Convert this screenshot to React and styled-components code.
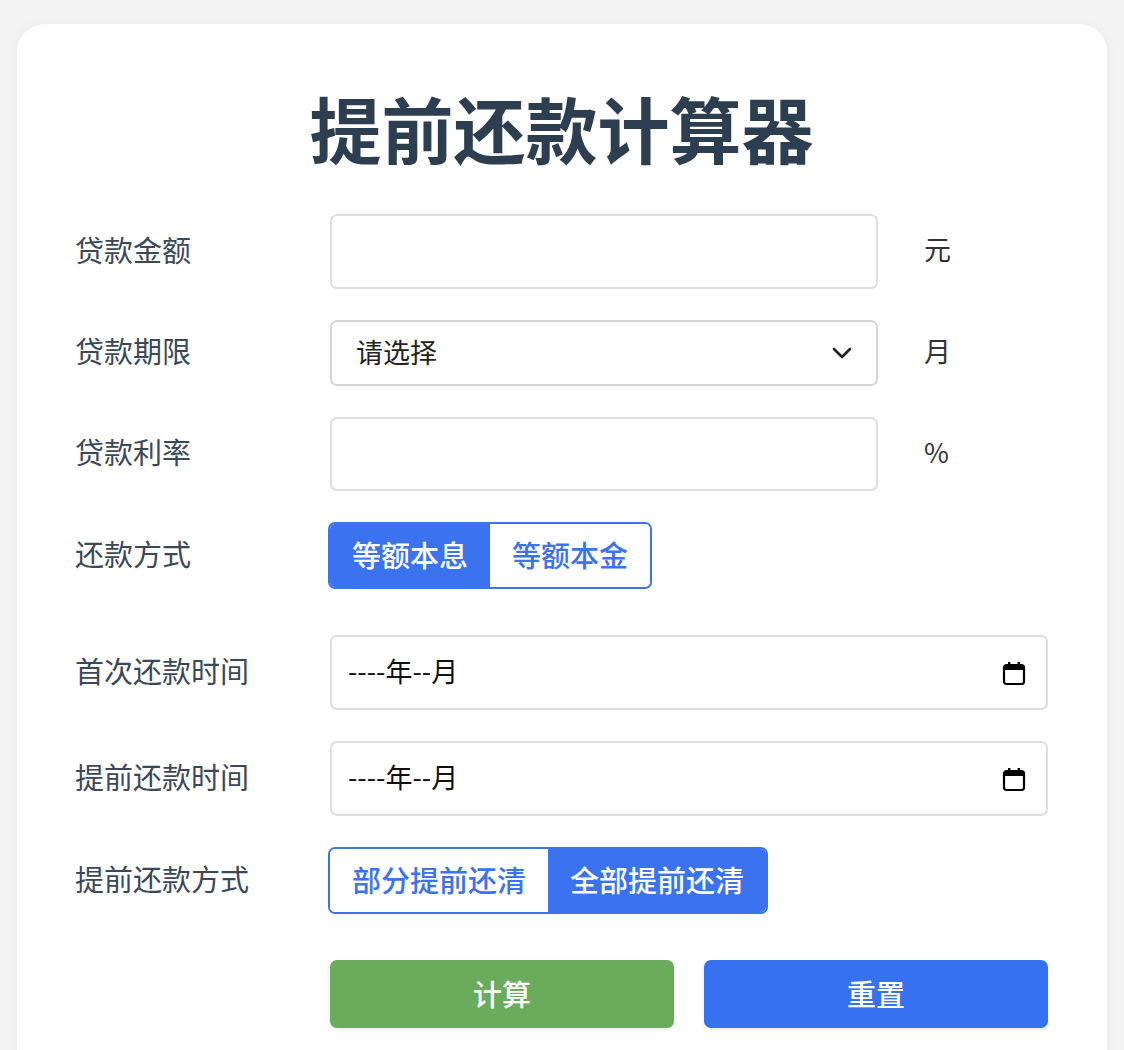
import React from "react"
import styled, { createGlobalStyle } from "styled-components"

const GlobalStyle = createGlobalStyle`
  * {
    box-sizing: border-box;
  }
  body {
    margin: 0;
    background: #f3f3f3;
    font-family: "Noto Sans CJK SC", "Noto Sans", sans-serif;
  }
`

const Page = styled.div`
  padding: 24px 17px 0;
  min-height: 1050px;
`

const Card = styled.div`
  background: #fff;
  border-radius: 28px;
  padding: 60px 59px 40px 58px;
  min-height: 1060px;
  box-shadow: 0 0 12px rgba(0, 0, 0, 0.04);
`

const Title = styled.h1`
  margin: 0 0 44px;
  text-align: center;
  font-size: 72px;
  line-height: 86px;
  font-weight: 700;
  color: #2c3e50;
`

const Row = styled.div`
  display: flex;
  align-items: center;
  margin-bottom: ${(p) => (p.$wide ? "46px" : "31px")};
`

const Label = styled.label`
  width: 255px;
  flex-shrink: 0;
  padding-bottom: 6px;
  font-size: 29px;
  color: #3b4858;
`

const Control = styled.div`
  flex: 1;
  min-width: 0;
  position: relative;
`

const Unit = styled.span`
  width: 170px;
  flex-shrink: 0;
  padding-left: 46px;
  padding-bottom: 6px;
  font-size: 27px;
  color: #333;
`

const TextInput = styled.input`
  display: block;
  width: 100%;
  height: ${(p) => p.$h || 75}px;
  border: 2px solid #dedede;
  border-radius: 7px;
  padding: 0 24px;
  font-size: 28px;
  font-family: inherit;
  outline: none;
  background: #fff;
`

const Select = styled.select`
  display: block;
  width: 100%;
  height: 66px;
  border: 2px solid #d6d6d6;
  border-radius: 7px;
  padding: 0 24px 4px;
  font-size: 27px;
  font-family: inherit;
  color: #222;
  background: #fff;
  appearance: none;
  outline: none;
`

const Chevron = styled.svg`
  position: absolute;
  right: 26px;
  top: 50%;
  margin-top: -6px;
  pointer-events: none;
`

const DateBox = styled.div`
  display: flex;
  align-items: center;
  justify-content: space-between;
  height: 75px;
  border: 2px solid #dedede;
  border-radius: 7px;
  padding: 0 20px 0 16px;
  font-size: 27px;
  color: #111;
`

const DateText = styled.span`
  padding-bottom: 4px;
`

const Group = styled.div`
  display: inline-flex;
  border: 2px solid #3a72ef;
  border-radius: 7px;
  overflow: hidden;
  margin-left: -2px;
`

const GroupButton = styled.button`
  height: 63px;
  padding: 0 22px 4px;
  border: none;
  font-size: 29px;
  font-family: inherit;
  font-weight: 500;
  background: ${(p) => (p.$active ? "#3a72ef" : "#fff")};
  color: ${(p) => (p.$active ? "#fff" : "#3a72ef")};
  cursor: pointer;
`

const Actions = styled.div`
  display: flex;
  gap: 30px;
  margin-left: 255px;
`

const ActionButton = styled.button`
  flex: 1;
  height: 68px;
  padding-bottom: 4px;
  border: none;
  border-radius: 7px;
  font-size: 29px;
  font-family: inherit;
  font-weight: 500;
  color: #fff;
  background: ${(p) => p.$bg};
  box-shadow: 0 2px 4px rgba(0, 0, 0, 0.08);
  cursor: pointer;
`

const CalendarIcon = () => (
  <svg width="24" height="26" viewBox="0 0 24 26">
    <rect x="2" y="5" width="20" height="19" rx="2.5" fill="none" stroke="#000" strokeWidth="2.2" />
    <rect x="2" y="5" width="20" height="5" rx="1.5" fill="#000" />
    <rect x="6" y="2" width="2.4" height="5" fill="#000" />
    <rect x="15.6" y="2" width="2.4" height="5" fill="#000" />
  </svg>
)

const App = () => (
  <Page>
    <GlobalStyle />
    <Card>
      <Title>提前还款计算器</Title>

      <Row>
        <Label>贷款金额</Label>
        <Control>
          <TextInput type="text" />
        </Control>
        <Unit>元</Unit>
      </Row>

      <Row>
        <Label>贷款期限</Label>
        <Control>
          <Select defaultValue="">
            <option value="">请选择</option>
            <option value="12">12</option>
            <option value="24">24</option>
            <option value="36">36</option>
          </Select>
          <Chevron width="20" height="12" viewBox="0 0 20 12">
            <path d="M2 2l8 8 8-8" fill="none" stroke="#222" strokeWidth="2.6" strokeLinecap="round" strokeLinejoin="round" />
          </Chevron>
        </Control>
        <Unit>月</Unit>
      </Row>

      <Row>
        <Label>贷款利率</Label>
        <Control>
          <TextInput type="text" $h={74} />
        </Control>
        <Unit>%</Unit>
      </Row>

      <Row $wide>
        <Label>还款方式</Label>
        <Control>
          <Group>
            <GroupButton $active>等额本息</GroupButton>
            <GroupButton>等额本金</GroupButton>
          </Group>
        </Control>
      </Row>

      <Row>
        <Label>首次还款时间</Label>
        <Control>
          <DateBox>
            <DateText>----年--月</DateText>
            <CalendarIcon />
          </DateBox>
        </Control>
      </Row>

      <Row>
        <Label>提前还款时间</Label>
        <Control>
          <DateBox>
            <DateText>----年--月</DateText>
            <CalendarIcon />
          </DateBox>
        </Control>
      </Row>

      <Row $wide>
        <Label>提前还款方式</Label>
        <Control>
          <Group>
            <GroupButton>部分提前还清</GroupButton>
            <GroupButton $active>全部提前还清</GroupButton>
          </Group>
        </Control>
      </Row>

      <Actions>
        <ActionButton $bg="#6aac5c">计算</ActionButton>
        <ActionButton $bg="#3671f0">重置</ActionButton>
      </Actions>
    </Card>
  </Page>
)

export default App
